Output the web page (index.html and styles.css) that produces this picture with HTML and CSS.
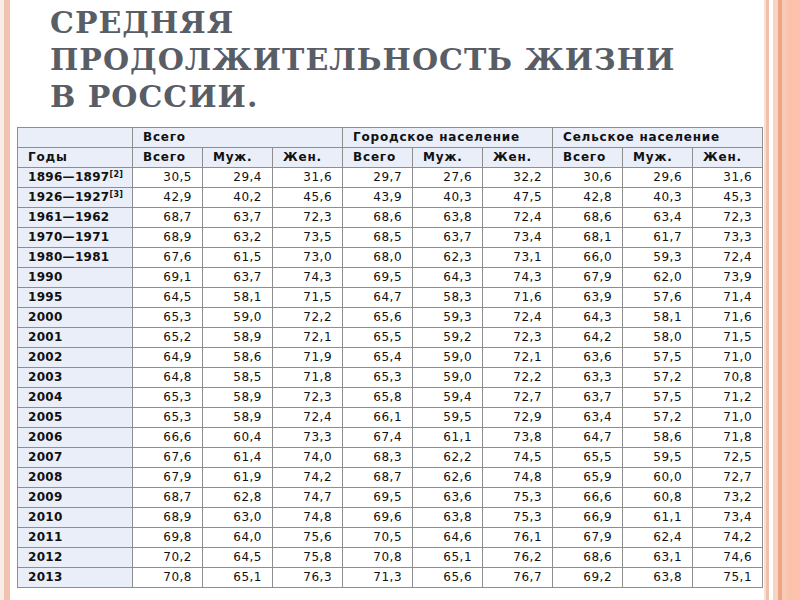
FILE: index.html
```html
<!DOCTYPE html>
<html lang="ru">
<head>
<meta charset="utf-8">
<title>Средняя продолжительность жизни в России</title>
<link rel="stylesheet" href="styles.css">
</head>
<body>
<div class="slide">
  <h1 class="title">СРЕДНЯЯ<br>ПРОДОЛЖИТЕЛЬНОСТЬ ЖИЗНИ<br>В РОССИИ.</h1>
  <table class="data">
    <colgroup>
      <col class="c-year"><col class="c-num"><col class="c-num"><col class="c-num"><col class="c-num"><col class="c-num"><col class="c-num"><col class="c-num"><col class="c-num"><col class="c-num">
    </colgroup>
    <thead>
      <tr><th></th><th colspan="3">Всего</th><th colspan="3">Городское население</th><th colspan="3">Сельское население</th></tr>
      <tr><th>Годы</th><th>Всего</th><th>Муж.</th><th>Жен.</th><th>Всего</th><th>Муж.</th><th>Жен.</th><th>Всего</th><th>Муж.</th><th>Жен.</th></tr>
    </thead>
    <tbody>
      <tr><th>1896—1897<sup>[2]</sup></th><td>30,5</td><td>29,4</td><td>31,6</td><td>29,7</td><td>27,6</td><td>32,2</td><td>30,6</td><td>29,6</td><td>31,6</td></tr>
      <tr><th>1926—1927<sup>[3]</sup></th><td>42,9</td><td>40,2</td><td>45,6</td><td>43,9</td><td>40,3</td><td>47,5</td><td>42,8</td><td>40,3</td><td>45,3</td></tr>
      <tr><th>1961—1962</th><td>68,7</td><td>63,7</td><td>72,3</td><td>68,6</td><td>63,8</td><td>72,4</td><td>68,6</td><td>63,4</td><td>72,3</td></tr>
      <tr><th>1970—1971</th><td>68,9</td><td>63,2</td><td>73,5</td><td>68,5</td><td>63,7</td><td>73,4</td><td>68,1</td><td>61,7</td><td>73,3</td></tr>
      <tr><th>1980—1981</th><td>67,6</td><td>61,5</td><td>73,0</td><td>68,0</td><td>62,3</td><td>73,1</td><td>66,0</td><td>59,3</td><td>72,4</td></tr>
      <tr><th>1990</th><td>69,1</td><td>63,7</td><td>74,3</td><td>69,5</td><td>64,3</td><td>74,3</td><td>67,9</td><td>62,0</td><td>73,9</td></tr>
      <tr><th>1995</th><td>64,5</td><td>58,1</td><td>71,5</td><td>64,7</td><td>58,3</td><td>71,6</td><td>63,9</td><td>57,6</td><td>71,4</td></tr>
      <tr><th>2000</th><td>65,3</td><td>59,0</td><td>72,2</td><td>65,6</td><td>59,3</td><td>72,4</td><td>64,3</td><td>58,1</td><td>71,6</td></tr>
      <tr><th>2001</th><td>65,2</td><td>58,9</td><td>72,1</td><td>65,5</td><td>59,2</td><td>72,3</td><td>64,2</td><td>58,0</td><td>71,5</td></tr>
      <tr><th>2002</th><td>64,9</td><td>58,6</td><td>71,9</td><td>65,4</td><td>59,0</td><td>72,1</td><td>63,6</td><td>57,5</td><td>71,0</td></tr>
      <tr><th>2003</th><td>64,8</td><td>58,5</td><td>71,8</td><td>65,3</td><td>59,0</td><td>72,2</td><td>63,3</td><td>57,2</td><td>70,8</td></tr>
      <tr><th>2004</th><td>65,3</td><td>58,9</td><td>72,3</td><td>65,8</td><td>59,4</td><td>72,7</td><td>63,7</td><td>57,5</td><td>71,2</td></tr>
      <tr><th>2005</th><td>65,3</td><td>58,9</td><td>72,4</td><td>66,1</td><td>59,5</td><td>72,9</td><td>63,4</td><td>57,2</td><td>71,0</td></tr>
      <tr><th>2006</th><td>66,6</td><td>60,4</td><td>73,3</td><td>67,4</td><td>61,1</td><td>73,8</td><td>64,7</td><td>58,6</td><td>71,8</td></tr>
      <tr><th>2007</th><td>67,6</td><td>61,4</td><td>74,0</td><td>68,3</td><td>62,2</td><td>74,5</td><td>65,5</td><td>59,5</td><td>72,5</td></tr>
      <tr><th>2008</th><td>67,9</td><td>61,9</td><td>74,2</td><td>68,7</td><td>62,6</td><td>74,8</td><td>65,9</td><td>60,0</td><td>72,7</td></tr>
      <tr><th>2009</th><td>68,7</td><td>62,8</td><td>74,7</td><td>69,5</td><td>63,6</td><td>75,3</td><td>66,6</td><td>60,8</td><td>73,2</td></tr>
      <tr><th>2010</th><td>68,9</td><td>63,0</td><td>74,8</td><td>69,6</td><td>63,8</td><td>75,3</td><td>66,9</td><td>61,1</td><td>73,4</td></tr>
      <tr><th>2011</th><td>69,8</td><td>64,0</td><td>75,6</td><td>70,5</td><td>64,6</td><td>76,1</td><td>67,9</td><td>62,4</td><td>74,2</td></tr>
      <tr><th>2012</th><td>70,2</td><td>64,5</td><td>75,8</td><td>70,8</td><td>65,1</td><td>76,2</td><td>68,6</td><td>63,1</td><td>74,6</td></tr>
      <tr><th>2013</th><td>70,8</td><td>65,1</td><td>76,3</td><td>71,3</td><td>65,6</td><td>76,7</td><td>69,2</td><td>63,8</td><td>75,1</td></tr>
    </tbody>
  </table>
</div>
</body>
</html>
```

FILE: styles.css
```css
html, body {
  margin: 0;
  padding: 0;
  background: #fff;
}

.slide {
  width: 800px;
  height: 600px;
  box-sizing: border-box;
  padding: 4px 0 0 17px;
  overflow: hidden;
  background: linear-gradient(to right,
    #f7ede6 0 4px,
    #f3c2ae 4px 10px,
    #ffffff 10px 764px,
    #f4e2da 764px 766px,
    #f0c0a8 766px 769px,
    #ffffff 769px 773px,
    #f8d2c2 773px 778px,
    #eaa685 778px 782px,
    #f9c9b5 782px 787px,
    #fcc2ab 787px 800px);
}

.title {
  margin: 0 0 12px 33px;
  font-family: "DejaVu Serif", "Liberation Serif", serif;
  font-weight: bold;
  font-size: 30px;
  line-height: 37px;
  letter-spacing: 1px;
  color: #585d66;
}

.data {
  border-collapse: collapse;
  table-layout: fixed;
  width: 746px;
  font-family: "DejaVu Sans", "Liberation Sans", sans-serif;
  font-size: 12px;
  color: #111;
  border: 1px solid #6f6f6f;
}

.c-year { width: 115px; }
.c-num { width: 70px; }

.data th,
.data td {
  height: 19px;
  padding: 0 10px;
  border: 1px solid #8e8e8e;
  box-sizing: border-box;
  white-space: nowrap;
  line-height: 19px;
}

.data th {
  background: #eaeef9;
  text-align: left;
  font-weight: bold;
  letter-spacing: 0.3px;
}

.data thead th {
  font-weight: bold;
  letter-spacing: 0.8px;
}

.data td {
  text-align: right;
  background: #fff;
  letter-spacing: 0.5px;
}

.data sup {
  font-size: 8px;
  line-height: 0;
  vertical-align: 4px;
}
```
